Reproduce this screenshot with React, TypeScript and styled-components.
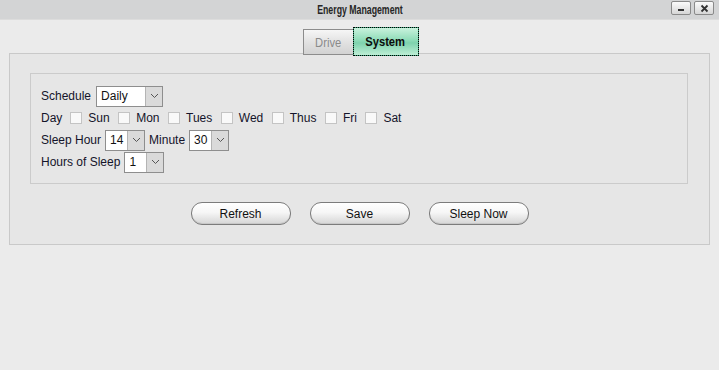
import React from "react";
import styled, { createGlobalStyle } from "styled-components";

const Global = createGlobalStyle`
  html, body { margin: 0; padding: 0; background: #ebebeb; }
  body { font-family: "Liberation Sans", Arial, sans-serif; font-size: 12px; color: #111; }
`;

const Window = styled.div`
  width: 719px;
  height: 370px;
  background: #ebebeb;
  display: flex;
  flex-direction: column;
`;

const TitleBar = styled.div`
  height: 19px;
  background: #d3d4d5;
  border-bottom: 1px solid #dcdcdc;
  display: grid;
  grid-template-columns: 1fr auto 1fr;
  align-items: center;
`;

const Title = styled.div`
  grid-column: 2;
  font-family: "Liberation Sans", Arial, sans-serif;
  font-weight: bold;
  font-size: 12.5px;
  color: #262626;
  transform: scaleX(0.7);
  padding-left: 1px;
`;

const WinButtons = styled.div`
  grid-column: 3;
  justify-self: end;
  display: flex;
  gap: 3px;
  padding-right: 5px;
  align-self: start;
  padding-top: 1px;
`;

const WinButton = styled.div`
  width: 20px;
  height: 14px;
  box-sizing: border-box;
  border: 1px solid #8a8a8a;
  border-radius: 2px;
  background: linear-gradient(#fbfbfb, #d6d6d6);
  display: flex;
  align-items: center;
  justify-content: center;
`;

const TabRow = styled.div`
  display: flex;
  justify-content: center;
  align-items: flex-start;
  margin-top: 7px;
  padding-left: 2px;
  position: relative;
  z-index: 1;
  height: 26px;
`;

const TabText = styled.span`
  display: inline-block;
  transform: scaleX(0.86);
`;

const Tab = styled.div<{ $active?: boolean }>`
  box-sizing: border-box;
  font-family: "Liberation Sans", Arial, sans-serif;
  font-size: 13px;
  display: flex;
  align-items: center;
  justify-content: center;
  ${(p) =>
    p.$active
      ? `
    width: 66px;
    height: 29px;
    margin-top: 0;
    font-weight: bold;
    color: #0b0b0b;
    border: 1px solid #3aa37a;
    outline: 1px dotted #000;
    outline-offset: -1px;
    background: linear-gradient(#c9f2dd 0%, #8fdcb8 45%, #7ed2ad 55%, #bdeed5 100%);
  `
      : `
    width: 50px;
    height: 26px;
    margin-top: 2px;
    color: #8a8a8a;
    border: 1px solid #8c8c8c;
    border-right: none;
    background: linear-gradient(#f6f6f6 0%, #e2e2e2 50%, #d2d2d2 100%);
  `}
`;

const Panel = styled.div`
  margin: 0 9px 0 9px;
  height: 192px;
  box-sizing: border-box;
  border: 1px solid #c9c9c9;
  background: #e6e6e6;
  padding: 19px 21px 18px 20px;
  display: flex;
  flex-direction: column;
`;

const Box = styled.div`
  border: 1px solid #cbcbcb;
  height: 111px;
  box-sizing: border-box;
  padding: 11px 10px 0 10px;
  display: flex;
  flex-direction: column;
`;

const Row = styled.div`
  height: 22px;
  display: flex;
  align-items: center;
  gap: 4px;
`;

const Label = styled.span<{ $gap?: number }>`
  color: #14142a;
  margin-right: ${(p) => p.$gap ?? 0}px;
`;

const Select = styled.div<{ $w: number }>`
  width: ${(p) => p.$w}px;
  height: 21px;
  box-sizing: border-box;
  border: 1px solid #8e8e8e;
  background: #fff;
  display: flex;
  align-items: stretch;
`;

const SelectValue = styled.div`
  flex: 1;
  padding-left: 4px;
  display: flex;
  align-items: center;
  color: #111;
`;

const SelectArrow = styled.div`
  width: 16px;
  border-left: 1px solid #b4b4b4;
  background: #dadada;
  display: flex;
  align-items: center;
  justify-content: center;
`;

const Check = styled.span`
  width: 12px;
  height: 12px;
  box-sizing: border-box;
  border: 1px solid #c4c4c4;
  background: #f9f9f9;
  margin: 0 2px 0 2px;
`;

const ButtonRow = styled.div`
  margin-top: 18px;
  display: flex;
  justify-content: center;
  gap: 19px;
  padding-left: 1px;
`;

const Pill = styled.div`
  width: 100px;
  height: 23px;
  box-sizing: border-box;
  border: 1px solid #7c7c7c;
  border-radius: 11px;
  background: linear-gradient(#ffffff 0%, #f6f6f6 45%, #e4e4e4 75%, #d6d6d6 100%);
  box-shadow: inset 0 -1px 0 #c8c8c8;
  display: flex;
  align-items: center;
  justify-content: center;
  color: #111;
  font-size: 12px;
`;

const Chevron = () => (
  <svg width="9" height="6" viewBox="0 0 9 6">
    <path d="M1 1 L4.5 4.5 L8 1" fill="none" stroke="#555" strokeWidth="1" />
  </svg>
);

const Drop = ({ value, w }: { value: string; w: number }) => (
  <Select $w={w}>
    <SelectValue>{value}</SelectValue>
    <SelectArrow>
      <Chevron />
    </SelectArrow>
  </Select>
);

const days = ["Sun", "Mon", "Tues", "Wed", "Thus", "Fri", "Sat"];

export default function App() {
  return (
    <>
      <Global />
      <Window>
        <TitleBar>
          <Title>Energy Management</Title>
          <WinButtons>
            <WinButton>
              <svg width="8" height="8" viewBox="0 0 8 8">
                <rect x="1" y="5" width="6" height="2" fill="#333" />
              </svg>
            </WinButton>
            <WinButton>
              <svg width="9" height="9" viewBox="0 0 9 9">
                <path d="M1.5 1.5 L7.5 7.5 M7.5 1.5 L1.5 7.5" stroke="#333" strokeWidth="1.8" />
              </svg>
            </WinButton>
          </WinButtons>
        </TitleBar>
        <TabRow>
          <Tab>
            <TabText>Drive</TabText>
          </Tab>
          <Tab $active>
            <TabText>System</TabText>
          </Tab>
        </TabRow>
        <Panel>
          <Box>
            <Row>
              <Label $gap={1}>Schedule</Label>
              <Drop value="Daily" w={67} />
            </Row>
            <Row>
              <Label $gap={2}>Day</Label>
              {days.map((d) => (
                <React.Fragment key={d}>
                  <Check />
                  <Label $gap={2.5}>{d}</Label>
                </React.Fragment>
              ))}
            </Row>
            <Row>
              <Label>Sleep Hour</Label>
              <Drop value="14" w={40} />
              <Label>Minute</Label>
              <Drop value="30" w={40} />
            </Row>
            <Row>
              <Label>Hours of Sleep</Label>
              <Drop value="1" w={40} />
            </Row>
          </Box>
          <ButtonRow>
            <Pill>Refresh</Pill>
            <Pill>Save</Pill>
            <Pill>Sleep Now</Pill>
          </ButtonRow>
        </Panel>
      </Window>
    </>
  );
}
